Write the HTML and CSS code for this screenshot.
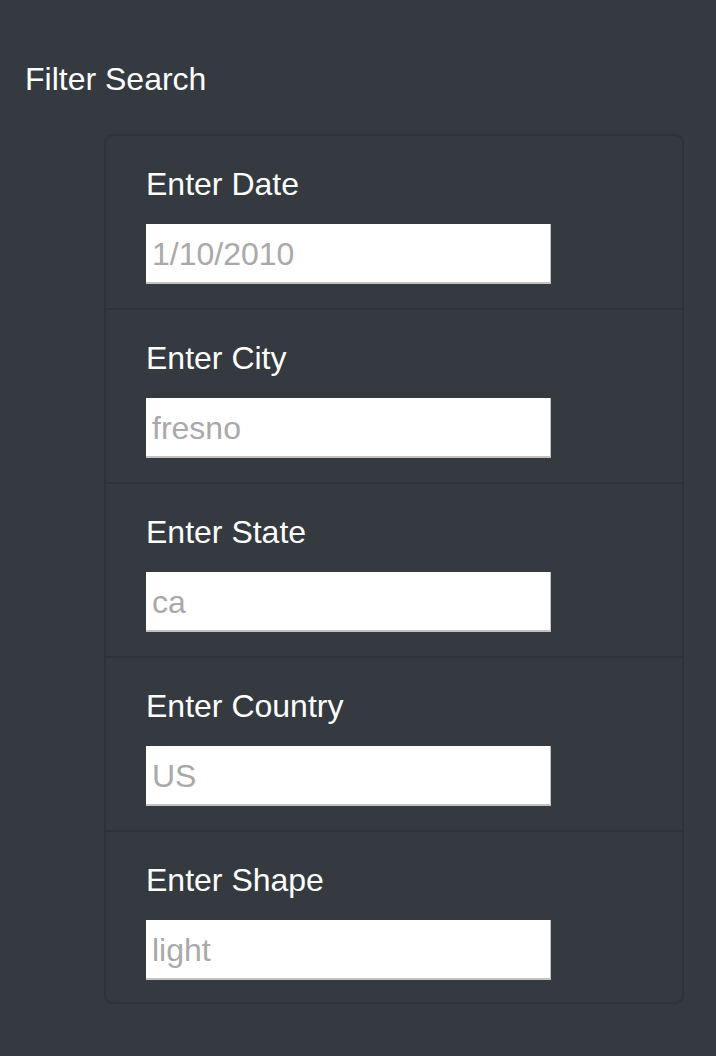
FILE: index.html
```html
<!DOCTYPE html>
<html>
<head>
<meta charset="utf-8">
<link rel="stylesheet" href="styles.css">
</head>
<body>
<div class="page">
  <div class="title">Filter Search</div>
  <ul class="filters">
    <li class="item"><label class="lbl" for="date">Enter Date</label><input class="field" id="date" type="text" placeholder="1/10/2010"></li>
    <li class="item"><label class="lbl" for="city">Enter City</label><input class="field" id="city" type="text" placeholder="fresno"></li>
    <li class="item"><label class="lbl" for="state">Enter State</label><input class="field" id="state" type="text" placeholder="ca"></li>
    <li class="item"><label class="lbl" for="country">Enter Country</label><input class="field" id="country" type="text" placeholder="US"></li>
    <li class="item"><label class="lbl" for="shape">Enter Shape</label><input class="field" id="shape" type="text" placeholder="light"></li>
  </ul>
</div>
</body>
</html>
```
FILE: styles.css
```css
html, body {
  margin: 0;
  padding: 0;
  background: #343a40;
}
body {
  font-family: "Liberation Sans", Arial, sans-serif;
  color: #ffffff;
}
.page {
  width: 716px;
  height: 1056px;
  box-sizing: border-box;
  padding-top: 55px;
}
.title {
  font-size: 32px;
  line-height: 48px;
  margin-left: 25px;
  height: 48px;
}
.filters {
  list-style: none;
  margin: 31px 0 0 104px;
  padding: 0;
  width: 580px;
  border: 2px solid #2e3338;
  border-radius: 9px;
  box-sizing: border-box;
}
.item {
  display: flex;
  flex-direction: column;
  align-items: flex-start;
  padding: 24px 40px 24px 40px;
  border-bottom: 2px solid #2e3338;
}
.item:last-child {
  border-bottom: none;
  padding-bottom: 22px;
}
.lbl {
  font-size: 32px;
  line-height: 48px;
  margin-bottom: 16px;
  color: #ffffff;
}
.field {
  width: 405px;
  height: 60px;
  box-sizing: border-box;
  border: none;
  box-shadow: inset -1px -2px 0 #c2c2c2;
  background: #ffffff;
  padding: 0 6px;
  font-family: "Liberation Sans", Arial, sans-serif;
  font-size: 32px;
  outline: none;
}
.field::placeholder {
  color: #a9a9a9;
}
```
